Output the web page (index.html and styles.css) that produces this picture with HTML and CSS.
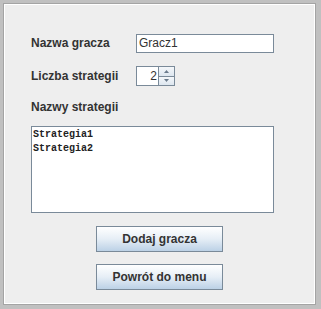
FILE: index.html
```html
<!DOCTYPE html>
<html>
<head>
<meta charset="utf-8">
<link rel="stylesheet" href="styles.css">
</head>
<body>
<div class="frame">
  <div class="form">
    <label class="lbl">Nazwa gracza</label>
    <div class="field text-field">Gracz1</div>

    <label class="lbl">Liczba strategii</label>
    <div class="spinner">
      <div class="spin-value">2</div>
      <div class="spin-btns">
        <div class="spin-btn"><svg width="5" height="3" viewBox="0 0 5 3"><path d="M2.5 0 L5 3 L0 3 Z" fill="#6a7b8c"/></svg></div>
        <div class="spin-btn"><svg width="5" height="3" viewBox="0 0 5 3"><path d="M0 0 L5 0 L2.5 3 Z" fill="#6a7b8c"/></svg></div>
      </div>
    </div>
  </div>

  <div class="lbl section">Nazwy strategii</div>
  <div class="textarea">Strategia1<br>Strategia2</div>

  <div class="buttons">
    <button class="btn">Dodaj gracza</button>
    <button class="btn">Powrót do menu</button>
  </div>
</div>
</body>
</html>
```

FILE: styles.css
```css
html, body {
  margin: 0;
  padding: 0;
  background: #c0c0c0;
  width: 321px;
  height: 309px;
  overflow: hidden;
}

.frame {
  margin: 3px 0 0 3px;
  width: 313px;
  height: 302px;
  box-sizing: border-box;
  border: 1px solid #a4a4a4;
  box-shadow: inset 0 0 0 1px #ffffff;
  background: #eeeeee;
  padding: 30px 0 0 27px;
  font-family: "Liberation Sans", Arial, sans-serif;
  color: #333333;
}

.form {
  display: grid;
  grid-template-columns: 105px 138px;
  grid-template-rows: 19px 20px;
  row-gap: 13px;
  align-items: center;
}

.lbl {
  font-size: 12px;
  font-weight: bold;
  color: #333333;
  line-height: 15px;
}

.field {
  box-sizing: border-box;
  height: 19px;
  border: 1px solid #7a8a99;
  background: #ffffff;
  font-size: 12px;
  line-height: 17px;
  padding-left: 2px;
  color: #333333;
}

.spinner {
  display: flex;
  width: 39px;
  height: 20px;
  box-sizing: border-box;
  border: 1px solid #7a8a99;
  background: #ffffff;
}

.spin-value {
  flex: 1;
  font-size: 12px;
  line-height: 18px;
  text-align: right;
  padding-right: 1px;
  color: #333333;
}

.spin-btns {
  width: 15px;
  display: flex;
  flex-direction: column;
  border-left: 1px solid #7a8a99;
}

.spin-btn {
  flex: 1;
  display: flex;
  align-items: center;
  justify-content: center;
  background: linear-gradient(#f4f7fa, #dde6ef);
}

.spin-btn + .spin-btn {
  border-top: 1px solid #7a8a99;
}

.section {
  margin-top: 14px;
}

.textarea {
  margin-top: 11px;
  width: 243px;
  height: 87px;
  box-sizing: border-box;
  border: 1px solid #7a8a99;
  background: #ffffff;
  font-family: "Liberation Mono", "Courier New", monospace;
  font-size: 10px;
  line-height: 14px;
  padding: 1px 0 0 1px;
  color: #222222;
  font-weight: bold;
}

.buttons {
  display: flex;
  flex-direction: column;
  align-items: center;
  gap: 12px;
  margin-top: 13px;
  margin-left: -27px;
}

.btn {
  width: 127px;
  height: 26px;
  box-sizing: border-box;
  border: 1px solid #7a8a99;
  background: linear-gradient(#ffffff 0%, #e6eef6 50%, #bcd1e6 100%);
  font-family: "Liberation Sans", Arial, sans-serif;
  font-size: 12px;
  font-weight: bold;
  color: #333333;
  padding: 0;
  margin: 0;
}
```
